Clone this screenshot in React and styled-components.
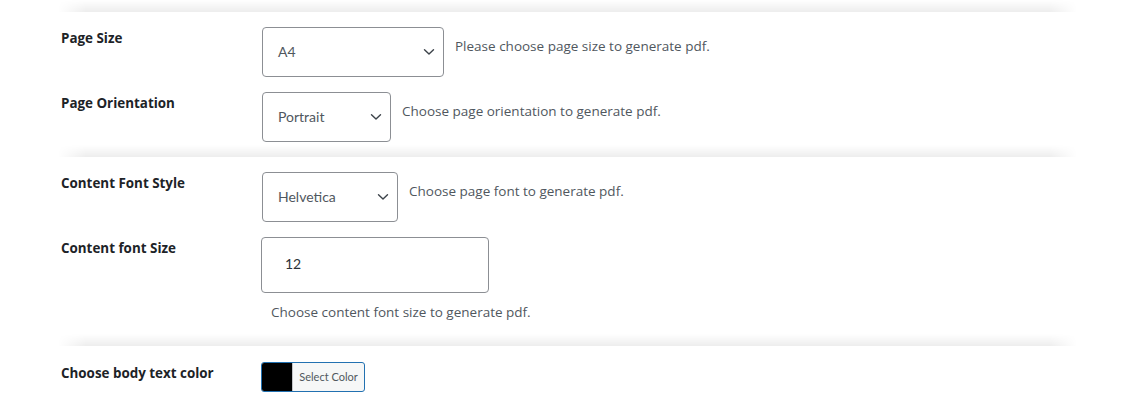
import React from "react";
import styled, { createGlobalStyle } from "styled-components";

const Global = createGlobalStyle`
  html, body { margin: 0; padding: 0; background: #fff; }
  body { font-family: "Open Sans", "Lato", sans-serif; }
  * { box-sizing: border-box; }
`;

const Page = styled.div`
  width: 1147px;
  height: 404px;
  overflow: hidden;
  background: #fff;
`;

const Separator = styled.div`
  margin-left: 58px;
  width: 1019px;
  height: 12px;
  background: linear-gradient(to bottom, rgba(0,0,0,0) 0%, rgba(0,0,0,0.07) 100%);
  -webkit-mask-image: linear-gradient(to right, transparent 0, #000 28px, #000 calc(100% - 28px), transparent 100%);
  mask-image: linear-gradient(to right, transparent 0, #000 28px, #000 calc(100% - 28px), transparent 100%);
`;

const Section = styled.div`
  display: flex;
  flex-direction: column;
  gap: ${(p) => p.$gap ?? 15}px;
  padding: ${(p) => p.$pt ?? 15}px 0 ${(p) => p.$pb ?? 3}px 61px;
`;

const Row = styled.div`
  display: grid;
  grid-template-columns: 200px 1fr;
  align-items: start;
`;

const Label = styled.div`
  font-size: 13.4px;
  line-height: 20px;
  font-weight: 700;
  color: #1d2327;
  padding-top: 1px;
`;

const Field = styled.div`
  display: flex;
  align-items: flex-start;
  gap: 11px;
  padding-left: ${(p) => p.$indent ?? 1}px;
`;

const Stack = styled.div`
  display: flex;
  flex-direction: column;
`;

const SelectBox = styled.div`
  width: ${(p) => p.$w}px;
  height: 50px;
  border: 1px solid #8c8f94;
  border-radius: 4px;
  display: flex;
  align-items: center;
  justify-content: space-between;
  padding: 0 8px 0 15px;
  font-family: "Lato", "Open Sans", sans-serif;
  font-size: 14px;
  color: #50575e;
  background: #fff;
`;

const SelectText = styled.span`
  margin-top: -2px;
`;

const Desc = styled.p`
  margin: ${(p) => p.$mt ?? 10}px 0 0 ${(p) => p.$ml ?? 0}px;
  font-size: 13.5px;
  line-height: 18px;
  color: #50575e;
`;

const TextInput = styled.div`
  width: 228px;
  height: 56px;
  border: 1px solid #8c8f94;
  border-radius: 4px;
  display: flex;
  align-items: center;
  padding: 0 0 3px 23px;
  font-family: "Lato", "Open Sans", sans-serif;
  font-size: 14px;
  color: #2c3338;
`;

const ColorButton = styled.div`
  display: flex;
  width: 104px;
  height: 30px;
  border: 1px solid #2271b1;
  border-radius: 3px;
  overflow: hidden;
  background: #f6f7f7;
`;

const Swatch = styled.div`
  width: 30px;
  background: ${(p) => p.$color};
`;

const ColorText = styled.span`
  flex: 1;
  display: flex;
  align-items: center;
  justify-content: center;
  font-family: "Lato", "Open Sans", sans-serif;
  font-size: 11px;
  color: #50575e;
  border-left: 1px solid #c3c4c7;
  padding-bottom: 1px;
`;

const Chevron = () => (
  <svg width="12" height="8" viewBox="0 0 12 8" fill="none">
    <path d="M1.5 1.8 L6 6 L10.5 1.8" stroke="#3c434a" strokeWidth="1.4" strokeLinecap="round" strokeLinejoin="round" />
  </svg>
);

const Select = ({ w, value }) => (
  <SelectBox $w={w}>
    <SelectText>{value}</SelectText>
    <Chevron />
  </SelectBox>
);

export default function App() {
  return (
    <Page>
      <Global />
      <Separator />
      <Section>
        <Row>
          <Label>Page Size</Label>
          <Field>
            <Select w={182} value="A4" />
            <Desc>Please choose page size to generate pdf.</Desc>
          </Field>
        </Row>
        <Row>
          <Label>Page Orientation</Label>
          <Field>
            <Select w={129} value="Portrait" />
            <Desc>Choose page orientation to generate pdf.</Desc>
          </Field>
        </Row>
      </Section>
      <Separator />
      <Section $pb={13}>
        <Row>
          <Label>Content Font Style</Label>
          <Field>
            <Select w={136} value="Helvetica" />
            <Desc>Choose page font to generate pdf.</Desc>
          </Field>
        </Row>
        <Row>
          <Label>Content font Size</Label>
          <Field $indent={0}>
            <Stack>
              <TextInput>12</TextInput>
              <Desc $mt={10} $ml={10}>Choose content font size to generate pdf.</Desc>
            </Stack>
          </Field>
        </Row>
      </Section>
      <Separator />
      <Section $pt={16}>
        <Row>
          <Label>Choose body text color</Label>
          <Field $indent={0}>
            <ColorButton>
              <Swatch $color="#000" />
              <ColorText>Select Color</ColorText>
            </ColorButton>
          </Field>
        </Row>
      </Section>
    </Page>
  );
}
